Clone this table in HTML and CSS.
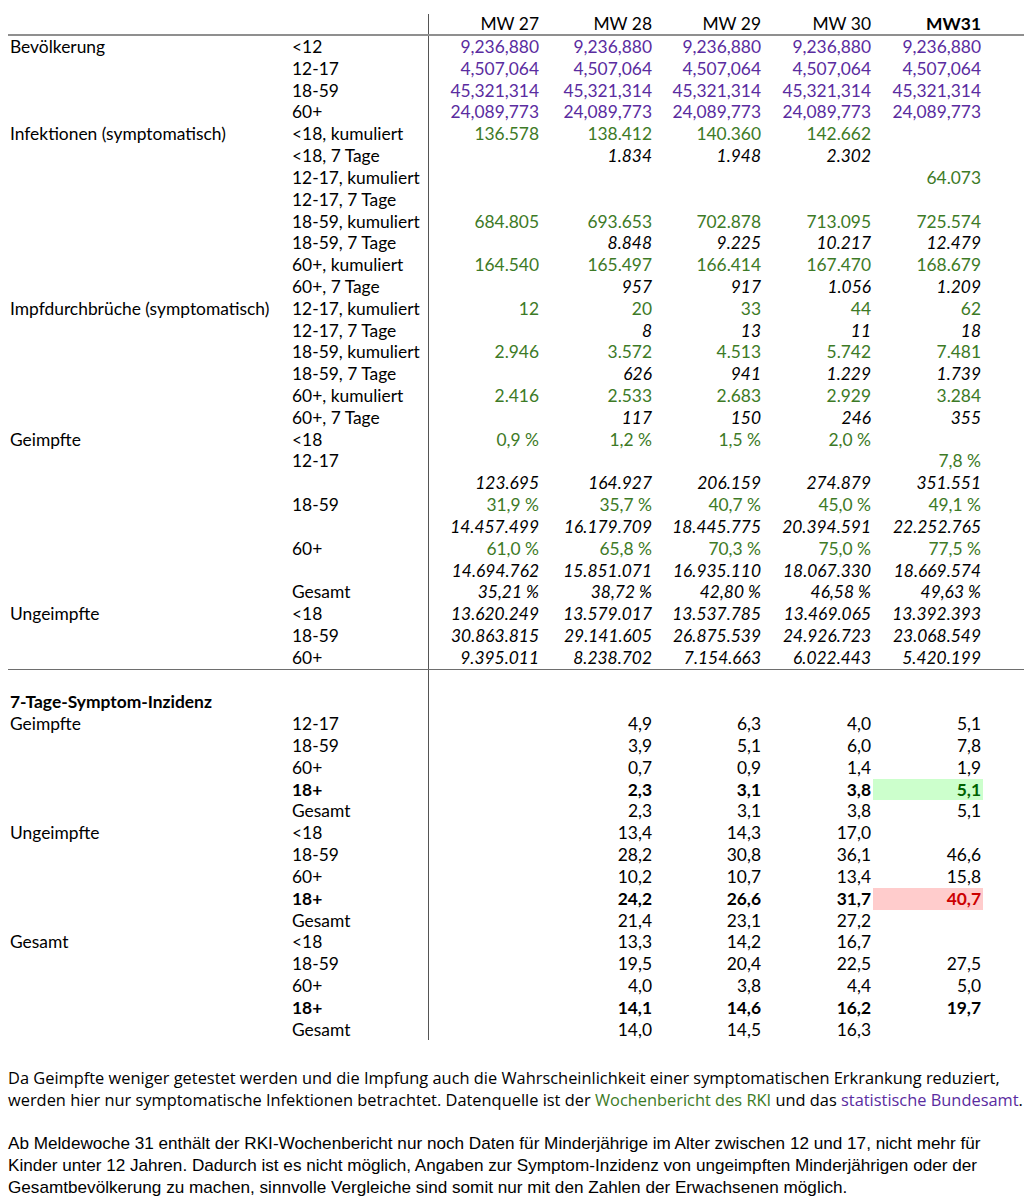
FILE: index.html
```html
<!DOCTYPE html>
<html lang="de">
<head>
<meta charset="utf-8">
<title>Symptom-Inzidenz</title>
<link rel="stylesheet" href="styles.css">
</head>
<body>
<table class="data">
  <colgroup>
    <col class="c-group"><col class="c-sub"><col class="c-w1"><col class="c-w2"><col class="c-w3"><col class="c-w4"><col class="c-w5"><col class="c-rest">
  </colgroup>
  <thead>
    <tr class="head">
      <th></th><th></th><th class="num first">MW 27</th><th class="num">MW 28</th><th class="num">MW 29</th><th class="num">MW 30</th><th class="num cur">MW31</th><th></th>
    </tr>
  </thead>
  <tbody class="sec1">
    <tr><td>Bevölkerung</td><td>&lt;12</td><td class="num first pop">9,236,880</td><td class="num pop">9,236,880</td><td class="num pop">9,236,880</td><td class="num pop">9,236,880</td><td class="num pop">9,236,880</td><td></td></tr>
    <tr><td></td><td>12-17</td><td class="num first pop">4,507,064</td><td class="num pop">4,507,064</td><td class="num pop">4,507,064</td><td class="num pop">4,507,064</td><td class="num pop">4,507,064</td><td></td></tr>
    <tr><td></td><td>18-59</td><td class="num first pop">45,321,314</td><td class="num pop">45,321,314</td><td class="num pop">45,321,314</td><td class="num pop">45,321,314</td><td class="num pop">45,321,314</td><td></td></tr>
    <tr><td></td><td>60+</td><td class="num first pop">24,089,773</td><td class="num pop">24,089,773</td><td class="num pop">24,089,773</td><td class="num pop">24,089,773</td><td class="num pop">24,089,773</td><td></td></tr>

    <tr><td>Infektionen (symptomatisch)</td><td>&lt;18, kumuliert</td><td class="num first src">136.578</td><td class="num src">138.412</td><td class="num src">140.360</td><td class="num src">142.662</td><td class="num"></td><td></td></tr>
    <tr><td></td><td>&lt;18, 7 Tage</td><td class="num first"></td><td class="num calc">1.834</td><td class="num calc">1.948</td><td class="num calc">2.302</td><td class="num"></td><td></td></tr>
    <tr><td></td><td>12-17, kumuliert</td><td class="num first"></td><td class="num"></td><td class="num"></td><td class="num"></td><td class="num src">64.073</td><td></td></tr>
    <tr><td></td><td>12-17, 7 Tage</td><td class="num first"></td><td class="num"></td><td class="num"></td><td class="num"></td><td class="num"></td><td></td></tr>
    <tr><td></td><td>18-59, kumuliert</td><td class="num first src">684.805</td><td class="num src">693.653</td><td class="num src">702.878</td><td class="num src">713.095</td><td class="num src">725.574</td><td></td></tr>
    <tr><td></td><td>18-59, 7 Tage</td><td class="num first"></td><td class="num calc">8.848</td><td class="num calc">9.225</td><td class="num calc">10.217</td><td class="num calc">12.479</td><td></td></tr>
    <tr><td></td><td>60+, kumuliert</td><td class="num first src">164.540</td><td class="num src">165.497</td><td class="num src">166.414</td><td class="num src">167.470</td><td class="num src">168.679</td><td></td></tr>
    <tr><td></td><td>60+, 7 Tage</td><td class="num first"></td><td class="num calc">957</td><td class="num calc">917</td><td class="num calc">1.056</td><td class="num calc">1.209</td><td></td></tr>

    <tr><td>Impfdurchbrüche (symptomatisch)</td><td>12-17, kumuliert</td><td class="num first src">12</td><td class="num src">20</td><td class="num src">33</td><td class="num src">44</td><td class="num src">62</td><td></td></tr>
    <tr><td></td><td>12-17, 7 Tage</td><td class="num first"></td><td class="num calc">8</td><td class="num calc">13</td><td class="num calc">11</td><td class="num calc">18</td><td></td></tr>
    <tr><td></td><td>18-59, kumuliert</td><td class="num first src">2.946</td><td class="num src">3.572</td><td class="num src">4.513</td><td class="num src">5.742</td><td class="num src">7.481</td><td></td></tr>
    <tr><td></td><td>18-59, 7 Tage</td><td class="num first"></td><td class="num calc">626</td><td class="num calc">941</td><td class="num calc">1.229</td><td class="num calc">1.739</td><td></td></tr>
    <tr><td></td><td>60+, kumuliert</td><td class="num first src">2.416</td><td class="num src">2.533</td><td class="num src">2.683</td><td class="num src">2.929</td><td class="num src">3.284</td><td></td></tr>
    <tr><td></td><td>60+, 7 Tage</td><td class="num first"></td><td class="num calc">117</td><td class="num calc">150</td><td class="num calc">246</td><td class="num calc">355</td><td></td></tr>

    <tr><td>Geimpfte</td><td>&lt;18</td><td class="num first src">0,9 %</td><td class="num src">1,2 %</td><td class="num src">1,5 %</td><td class="num src">2,0 %</td><td class="num"></td><td></td></tr>
    <tr><td></td><td>12-17</td><td class="num first"></td><td class="num"></td><td class="num"></td><td class="num"></td><td class="num src">7,8 %</td><td></td></tr>
    <tr><td></td><td></td><td class="num first calc">123.695</td><td class="num calc">164.927</td><td class="num calc">206.159</td><td class="num calc">274.879</td><td class="num calc">351.551</td><td></td></tr>
    <tr><td></td><td>18-59</td><td class="num first src">31,9 %</td><td class="num src">35,7 %</td><td class="num src">40,7 %</td><td class="num src">45,0 %</td><td class="num src">49,1 %</td><td></td></tr>
    <tr><td></td><td></td><td class="num first calc">14.457.499</td><td class="num calc">16.179.709</td><td class="num calc">18.445.775</td><td class="num calc">20.394.591</td><td class="num calc">22.252.765</td><td></td></tr>
    <tr><td></td><td>60+</td><td class="num first src">61,0 %</td><td class="num src">65,8 %</td><td class="num src">70,3 %</td><td class="num src">75,0 %</td><td class="num src">77,5 %</td><td></td></tr>
    <tr><td></td><td></td><td class="num first calc">14.694.762</td><td class="num calc">15.851.071</td><td class="num calc">16.935.110</td><td class="num calc">18.067.330</td><td class="num calc">18.669.574</td><td></td></tr>
    <tr><td></td><td>Gesamt</td><td class="num first calc">35,21 %</td><td class="num calc">38,72 %</td><td class="num calc">42,80 %</td><td class="num calc">46,58 %</td><td class="num calc">49,63 %</td><td></td></tr>

    <tr><td>Ungeimpfte</td><td>&lt;18</td><td class="num first calc">13.620.249</td><td class="num calc">13.579.017</td><td class="num calc">13.537.785</td><td class="num calc">13.469.065</td><td class="num calc">13.392.393</td><td></td></tr>
    <tr><td></td><td>18-59</td><td class="num first calc">30.863.815</td><td class="num calc">29.141.605</td><td class="num calc">26.875.539</td><td class="num calc">24.926.723</td><td class="num calc">23.068.549</td><td></td></tr>
    <tr class="last"><td></td><td>60+</td><td class="num first calc">9.395.011</td><td class="num calc">8.238.702</td><td class="num calc">7.154.663</td><td class="num calc">6.022.443</td><td class="num calc">5.420.199</td><td></td></tr>
  </tbody>
  <tbody class="sec2">
    <tr><td></td><td></td><td class="num first"></td><td></td><td></td><td></td><td></td><td></td></tr>
    <tr><td class="title">7-Tage-Symptom-Inzidenz</td><td></td><td class="num first"></td><td></td><td></td><td></td><td></td><td></td></tr>

    <tr><td>Geimpfte</td><td>12-17</td><td class="num first"></td><td class="num">4,9</td><td class="num">6,3</td><td class="num">4,0</td><td class="num">5,1</td><td></td></tr>
    <tr><td></td><td>18-59</td><td class="num first"></td><td class="num">3,9</td><td class="num">5,1</td><td class="num">6,0</td><td class="num">7,8</td><td></td></tr>
    <tr><td></td><td>60+</td><td class="num first"></td><td class="num">0,7</td><td class="num">0,9</td><td class="num">1,4</td><td class="num">1,9</td><td></td></tr>
    <tr class="key"><td></td><td>18+</td><td class="num first"></td><td class="num">2,3</td><td class="num">3,1</td><td class="num">3,8</td><td class="num good">5,1</td><td></td></tr>
    <tr><td></td><td>Gesamt</td><td class="num first"></td><td class="num">2,3</td><td class="num">3,1</td><td class="num">3,8</td><td class="num">5,1</td><td></td></tr>

    <tr><td>Ungeimpfte</td><td>&lt;18</td><td class="num first"></td><td class="num">13,4</td><td class="num">14,3</td><td class="num">17,0</td><td class="num"></td><td></td></tr>
    <tr><td></td><td>18-59</td><td class="num first"></td><td class="num">28,2</td><td class="num">30,8</td><td class="num">36,1</td><td class="num">46,6</td><td></td></tr>
    <tr><td></td><td>60+</td><td class="num first"></td><td class="num">10,2</td><td class="num">10,7</td><td class="num">13,4</td><td class="num">15,8</td><td></td></tr>
    <tr class="key"><td></td><td>18+</td><td class="num first"></td><td class="num">24,2</td><td class="num">26,6</td><td class="num">31,7</td><td class="num bad">40,7</td><td></td></tr>
    <tr><td></td><td>Gesamt</td><td class="num first"></td><td class="num">21,4</td><td class="num">23,1</td><td class="num">27,2</td><td class="num"></td><td></td></tr>

    <tr><td>Gesamt</td><td>&lt;18</td><td class="num first"></td><td class="num">13,3</td><td class="num">14,2</td><td class="num">16,7</td><td class="num"></td><td></td></tr>
    <tr><td></td><td>18-59</td><td class="num first"></td><td class="num">19,5</td><td class="num">20,4</td><td class="num">22,5</td><td class="num">27,5</td><td></td></tr>
    <tr><td></td><td>60+</td><td class="num first"></td><td class="num">4,0</td><td class="num">3,8</td><td class="num">4,4</td><td class="num">5,0</td><td></td></tr>
    <tr class="key"><td></td><td>18+</td><td class="num first"></td><td class="num">14,1</td><td class="num">14,6</td><td class="num">16,2</td><td class="num">19,7</td><td></td></tr>
    <tr><td></td><td>Gesamt</td><td class="num first"></td><td class="num">14,0</td><td class="num">14,5</td><td class="num">16,3</td><td class="num"></td><td></td></tr>
  </tbody>
</table>

<p class="note note-a">Da Geimpfte weniger getestet werden und die Impfung auch die Wahrscheinlichkeit einer symptomatischen Erkrankung reduziert, werden hier nur symptomatische Infektionen betrachtet. Datenquelle ist der <a class="l-rki" href="#">Wochenbericht des RKI</a> und das <a class="l-destatis" href="#">statistische Bundesamt</a>.</p>

<p class="note note-b">Ab Meldewoche 31 enthält der RKI-Wochenbericht nur noch Daten für Minderjährige im Alter zwischen 12 und 17, nicht mehr für Kinder unter 12 Jahren. Dadurch ist es nicht möglich, Angaben zur Symptom-Inzidenz von ungeimpften Minderjährigen oder der Gesamtbevölkerung zu machen, sinnvolle Vergleiche sind somit nur mit den Zahlen der Erwachsenen möglich.</p>
</body>
</html>
```

FILE: styles.css
```css
html {
  overflow-x: hidden;
}

body {
  margin: 0;
  padding: 14px 0 0 8px;
  background: #ffffff;
  color: #000000;
}

.data {
  border-collapse: collapse;
  table-layout: fixed;
  width: 1016px;
  font-family: Lato, "Carlito", "Liberation Sans", sans-serif;
  font-size: 17.4px;
}

.c-group { width: 282px; }
.c-sub { width: 138px; }
.c-w1 { width: 113px; }
.c-w2 { width: 113px; }
.c-w3 { width: 109px; }
.c-w4 { width: 110px; }
.c-w5 { width: 110px; }
.c-rest { width: 41px; }

.data th,
.data td {
  padding: 0 2px;
  height: 21.82px;
  line-height: 21.82px;
  white-space: nowrap;
  text-align: left;
  font-weight: normal;
  vertical-align: middle;
}

.data .head th {
  height: 20px;
  line-height: 20px;
  border-bottom: 2px solid #8f8f8f;
}

.data .num {
  text-align: right;
}

.data .first {
  border-left: 1px solid #555555;
}

.data .head .cur {
  font-weight: bold;
}

.pop {
  color: #5a2ca0;
}

.src {
  color: #3d7a26;
}

.calc {
  font-style: italic;
}

.sec1 .last td {
  border-bottom: 1px solid #6e6e6e;
}

.data .title {
  font-weight: bold;
}

.data .key td {
  font-weight: bold;
}

.data .good {
  background: #ccffcc;
  color: #006100;
}

.data .bad {
  background: #ffcccc;
  color: #cc0000;
}

.note {
  margin: 0;
  line-height: 22px;
}

.note-a {
  margin-top: 27px;
  font-family: "Open Sans", "Noto Sans", sans-serif;
  font-size: 16.4px;
}

.note-b {
  margin-top: 21px;
  padding-right: 8px;
  font-family: "Liberation Sans", Arial, sans-serif;
  font-size: 17.15px;
}

.note a {
  text-decoration: none;
}

.l-rki {
  color: #3d7a26;
}

.l-destatis {
  color: #5a2ca0;
}
```
